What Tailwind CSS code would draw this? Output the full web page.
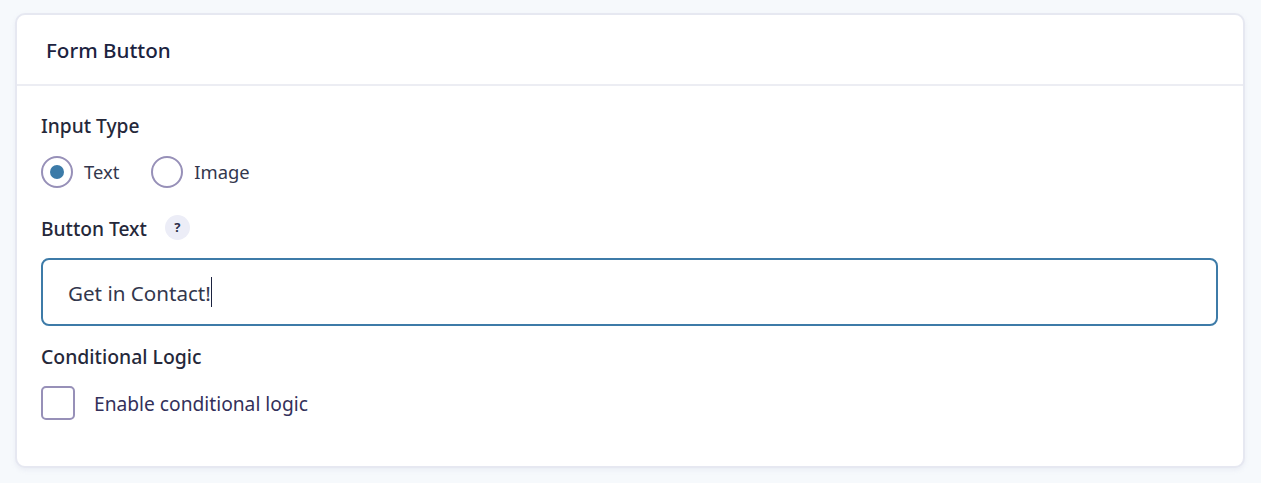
<!doctype html>
<html lang="en">
<head>
<meta charset="utf-8">
<title>Form Button</title>
<script src="https://cdn.jsdelivr.net/npm/@tailwindcss/browser@4"></script>
</head>
<body class="m-0 h-[483px] overflow-hidden bg-[#f6f9fc] font-['Noto_Sans',sans-serif]">
<div class="pt-[13px] pl-[15px] pr-[16px]">
  <section class="h-[455px] rounded-[10px] border-2 border-[#e6e8f1] bg-white shadow-[0_2px_4px_rgba(200,205,225,0.25)]">
    <header class="h-[71px] border-b-2 border-[#ecedf3] pl-[29px] pt-[19px] text-[20.6px] leading-[32px] font-medium text-[#1c2340]">Form Button</header>
    <div class="pl-[24px] pr-[25px]">
      <div class="mt-[24px] text-[19.2px] leading-[32px] font-medium text-[#25283a]">Input Type</div>
      <div class="mt-[14px] flex items-center text-[18.4px] leading-[32px] text-[#33374d]">
        <span class="flex h-[32px] w-[32px] items-center justify-center rounded-full border-2 border-[#9790b8]"><span class="h-[14px] w-[14px] rounded-full bg-[#3c7ba8]"></span></span>
        <span class="ml-[11px]">Text</span>
        <span class="ml-[32px] h-[32px] w-[32px] rounded-full border-2 border-[#9790b8]"></span>
        <span class="ml-[11px]">Image</span>
      </div>
      <div class="mt-[25px] flex items-center">
        <span class="text-[19.2px] leading-[32px] font-medium text-[#25283a]">Button Text</span>
        <span class="ml-[18px] -mt-[3px] flex h-[25px] w-[25px] items-center justify-center rounded-full bg-[#ecedf7] text-[13px] font-bold text-[#2a2d4a]">?</span>
      </div>
      <div class="mt-[13px] flex h-[68px] items-center rounded-[8px] border-2 border-[#3d7ba8] pl-[25px] text-[20.6px] text-[#33374d]"><span class="pt-[3px]">Get in Contact!</span><span class="h-[30px] w-px bg-[#1c2340]"></span></div>
      <div class="mt-[15px] text-[19.4px] leading-[32px] font-medium text-[#25283a]">Conditional Logic</div>
      <div class="mt-[13px] flex items-center">
        <span class="h-[34px] w-[34px] rounded-[5px] border-2 border-[#9790b8]"></span>
        <span class="ml-[19px] pt-[2px] text-[19.2px] text-[#33305a]">Enable conditional logic</span>
      </div>
    </div>
  </section>
</div>
</body>
</html>
